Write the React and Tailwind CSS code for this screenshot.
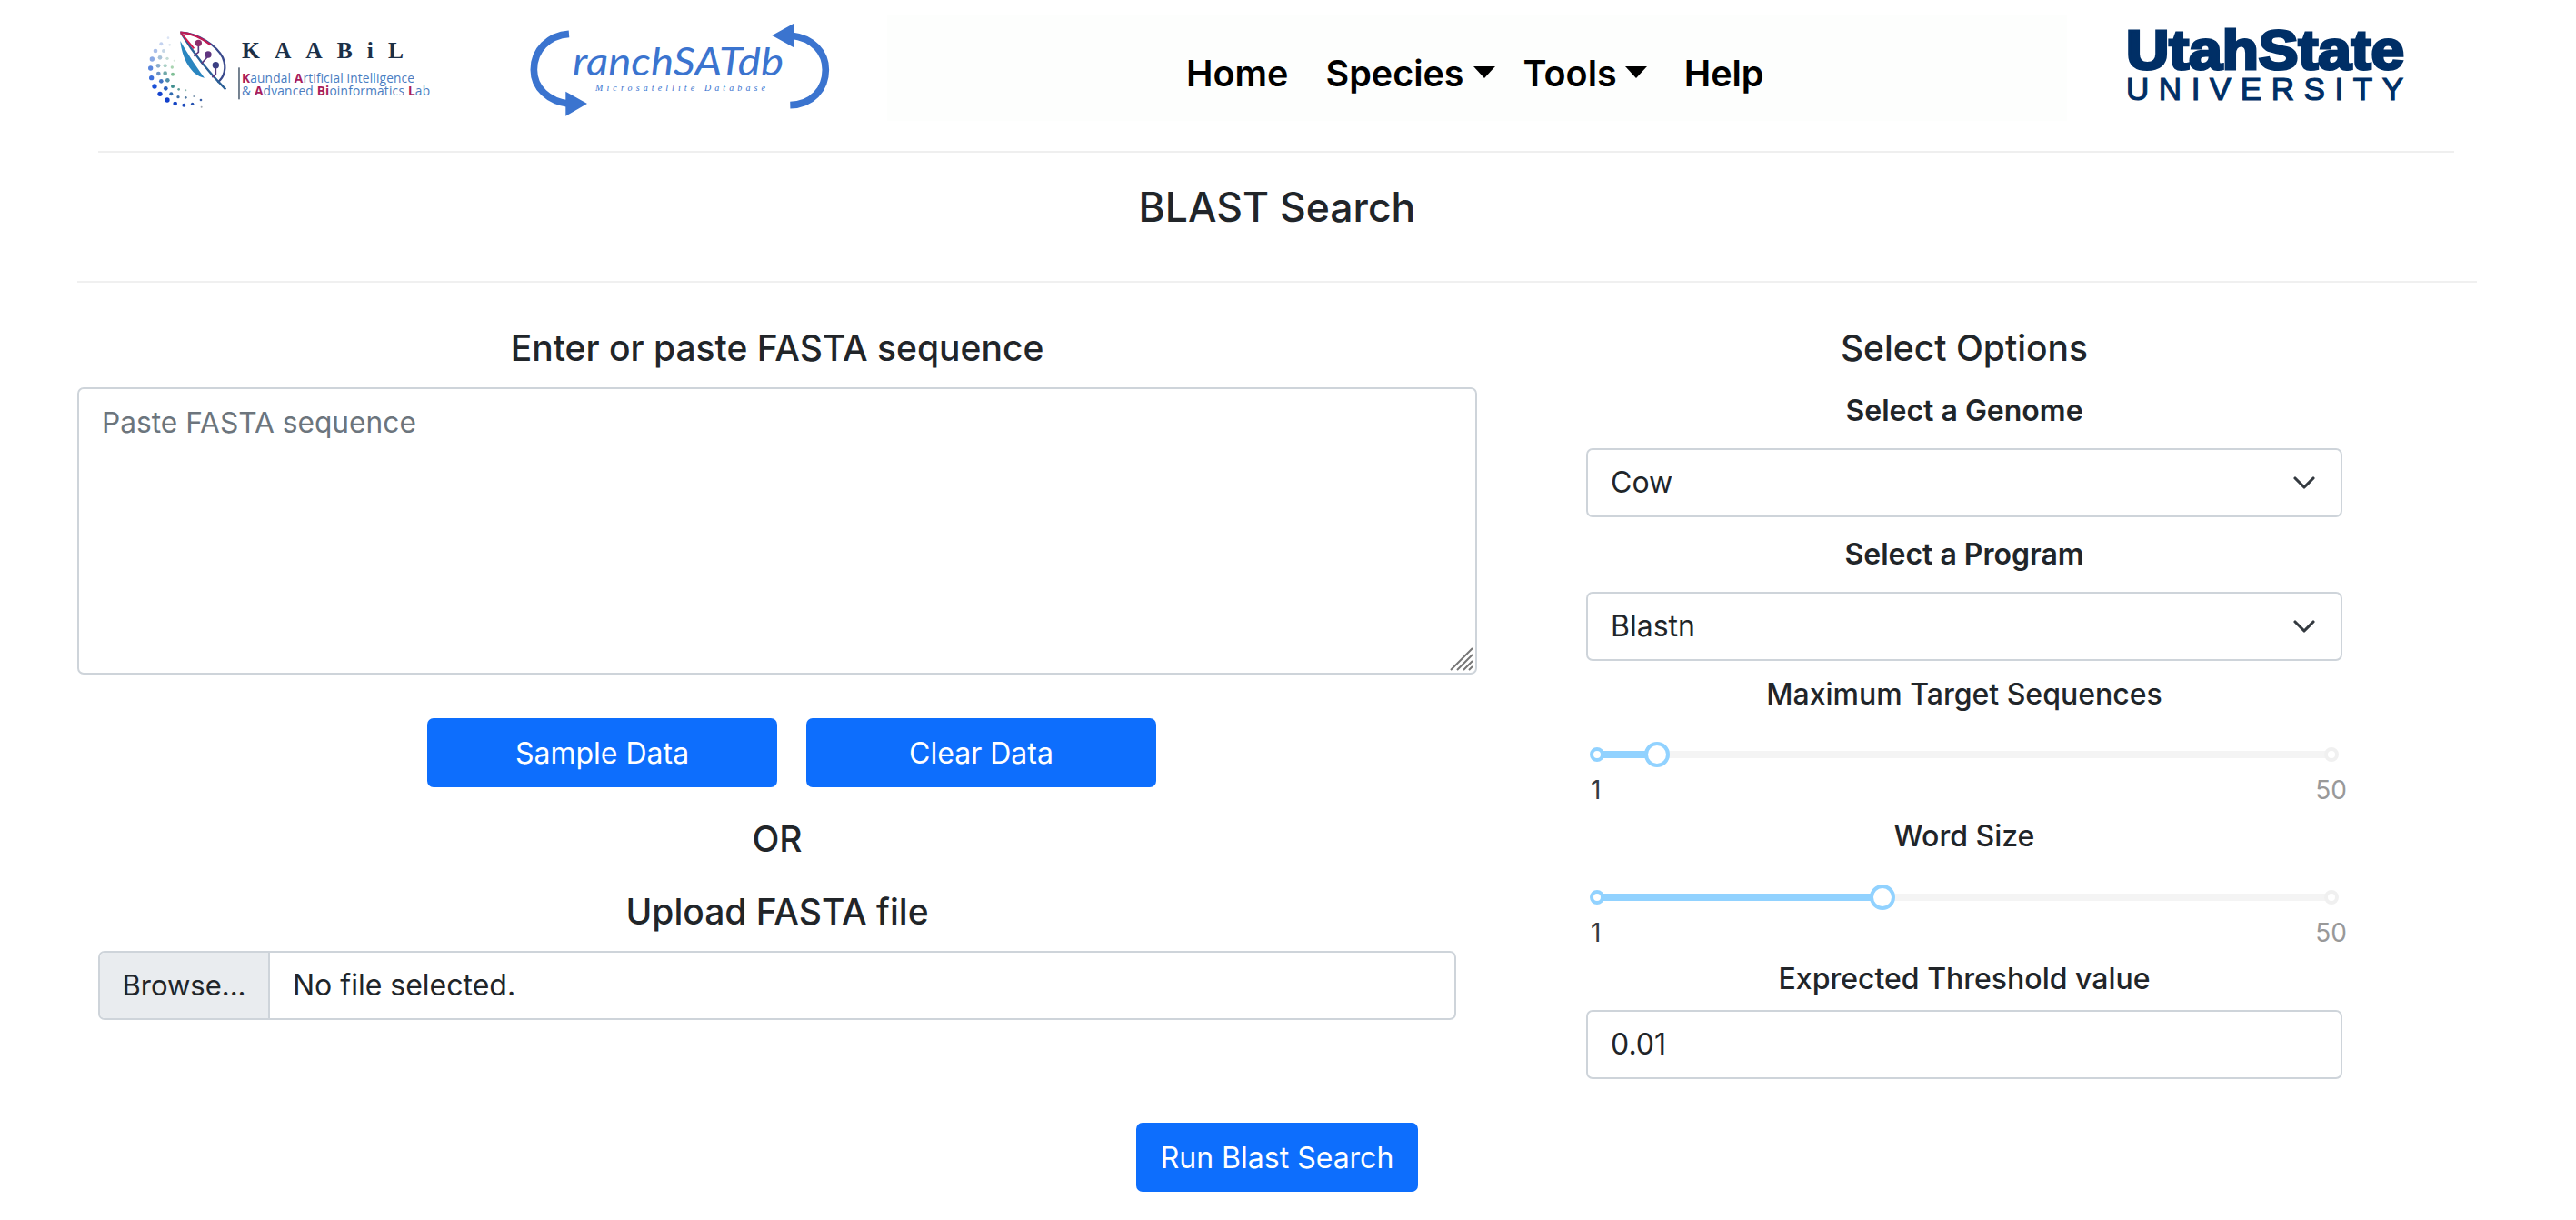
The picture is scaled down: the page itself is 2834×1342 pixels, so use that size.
import { ChevronDown } from "lucide-react";

const label = "text-[39px] leading-[40px] font-medium text-[#212529]";
const fieldLabel = "text-center text-[32px] leading-[40px] text-[#212529]";
const field = "h-[76px] rounded-[7px] border-2 border-[#ced4da] bg-white";

// dots of the KAABiL mark: x, y, radius, colour
const dots = [
  [105, 65, 4, "#dbe4f5"], [82, 85, 6, "#c3d2ef"], [110, 88, 4, "#dde6ee"], [63, 108, 7, "#a9bfe9"], [90, 108, 6, "#c5d6e6"],
  [52, 135, 8, "#8aa9e4"], [78, 130, 7, "#a9c2d8"], [102, 133, 5, "#c5dcd5"], [125, 140, 3, "#d5e8d8"], [47, 165, 8, "#5a86dd"],
  [72, 157, 7, "#8aaccd"], [95, 157, 6, "#a9cfc5"], [118, 162, 5, "#a8d4b0"], [50, 197, 8, "#3d6fdb"], [73, 183, 7, "#6a92c6"],
  [95, 182, 7, "#6fa8a8"], [120, 185, 6, "#7fbf96"], [60, 225, 8, "#1a50d8"], [82, 208, 7, "#3f72c4"], [103, 205, 7, "#4f8ea8"],
  [120, 225, 6, "#3f8f8f"], [140, 235, 4, "#5f9f98"], [163, 238, 3, "#8fb8b0"], [78, 250, 8, "#1443cf"], [97, 232, 7, "#2a60be"],
  [115, 250, 6, "#2f6ab0"], [138, 260, 5, "#3f70a8"], [163, 262, 4, "#4f78a0"], [190, 258, 3, "#7f98b0"], [102, 270, 8, "#1240cc"],
  [128, 282, 7, "#1444c4"], [157, 287, 6, "#1a48bc"], [185, 283, 5, "#2450b0"], [213, 270, 4, "#3a60a8"], [215, 293, 3, "#a0a8b0"],
];

function KaabilLogo() {
  return (
    <svg width="340" height="110" viewBox="0 0 340 110" className="shrink-0">
      <g transform="scale(0.3333)">
        {dots.map(([x, y, r, c], i) => (
          <circle key={i} cx={x} cy={y} r={r} fill={c} />
        ))}
        <path d="M145 75 C150 130 180 190 225 197 C190 150 165 110 145 75 Z" fill="#2a86c0" />
        <path d="M145 47 C205 50 265 90 285 130 C300 165 290 195 268 212" fill="none" stroke="#3a4a8c" strokeWidth="7" />
        <path d="M145 47 C185 50 215 65 245 88" fill="none" stroke="#c01a54" strokeWidth="7" />
        <path d="M148 50 C185 110 230 170 295 235" fill="none" stroke="#2a5f96" strokeWidth="7" />
        <path d="M148 50 L190 100" fill="none" stroke="#d01c50" strokeWidth="6" />
        <path d="M205 90 V112 L190 125 M237 125 L215 150 M262 160 V185 L250 195" fill="none" stroke="#5c3a80" strokeWidth="5" />
        <circle cx="205" cy="82" r="11" fill="#8e2d6c" />
        <circle cx="237" cy="120" r="11" fill="#5f3580" />
        <circle cx="262" cy="155" r="11" fill="#3a3f82" />
        <rect x="337" y="163" width="4" height="105" fill="#33465c" />
      </g>
      <text x="116" y="44.3" fontFamily="Liberation Serif, serif" fontWeight="700" fontSize="25.5" textLength="178" fill="#1c3048">KAABiL</text>
      <text x="116" y="70.7" fontFamily="Open Sans, sans-serif" fontSize="13.7" textLength="190" fill="#4a7cc0">
        <tspan fill="#a81e5c" fontWeight="700">K</tspan>aundal <tspan fill="#a81e5c" fontWeight="700">A</tspan>rtificial intelligence
      </text>
      <text x="116" y="85" fontFamily="Open Sans, sans-serif" fontSize="13.7" textLength="207" fill="#4a7cc0">
        &amp; <tspan fill="#a81e5c" fontWeight="700">A</tspan>dvanced <tspan fill="#a81e5c" fontWeight="700">Bi</tspan>oinformatics <tspan fill="#a81e5c" fontWeight="700">L</tspan>ab
      </text>
    </svg>
  );
}

function BranchLogo() {
  return (
    <svg width="360" height="120" viewBox="0 0 360 120" className="shrink-0">
      <g transform="scale(0.3333)">
        <path d="M168 67 C100 72 52 120 52 185 C52 245 100 290 170 298" fill="none" stroke="#3b74cf" strokeWidth="23" />
        <path d="M157 257 L228 297 L157 338 Z" fill="#3b74cf" />
        <path d="M898 302 C970 300 1015 250 1015 185 C1015 130 975 80 900 72" fill="none" stroke="#3b74cf" strokeWidth="23" />
        <path d="M910 32 L838 72 L910 112 Z" fill="#3b74cf" />
      </g>
      <text x="60" y="68" fontFamily="Lato, sans-serif" fontStyle="italic" fontSize="42" textLength="232" lengthAdjust="spacingAndGlyphs" fill="#3b74cf">ranchSATdb</text>
      <text x="85" y="85" fontFamily="Liberation Serif, serif" fontStyle="italic" fontSize="10" textLength="187" fill="#3b74cf">Microsatellite Database</text>
    </svg>
  );
}

function UsuLogo() {
  return (
    <svg width="340" height="110" viewBox="0 0 340 110" className="shrink-0">
      <text x="19" y="60.5" fontFamily="Liberation Sans, sans-serif" fontWeight="700" fontSize="62" textLength="306" lengthAdjust="spacingAndGlyphs" stroke="#002f66" strokeWidth="3.2" fill="#002f66">UtahState</text>
      <text x="19" y="94.5" fontFamily="Liberation Sans, sans-serif" fontSize="35" textLength="305" stroke="#002f66" strokeWidth="1.2" fill="#002f66">UNIVERSITY</text>
    </svg>
  );
}

function Caret() {
  return <i className="w-0 h-0 border-x-[12px] border-x-transparent border-t-[13px] border-t-black -mt-[5px]" />;
}

function Slider({ percent, thumbLeft }) {
  return (
    <div>
      <div className="relative h-[28px] mx-[12px]">
        <div className="absolute top-[10px] left-0 right-0 h-[8px] bg-[#f4f4f4]" />
        <div className="absolute top-[10px] left-0 h-[8px] bg-[#91d2ff]" style={{ width: `${percent}%` }} />
        <div className="absolute top-[6px] -left-[8px] w-[16px] h-[16px] rounded-full bg-white border-[4px] border-[#91d2ff]" />
        <div className="absolute top-[6px] -right-[8px] w-[16px] h-[16px] rounded-full bg-white border-[4px] border-[#f0f0f0]" />
        <div className="absolute top-0 w-[28px] h-[28px] rounded-full bg-white border-[4px] border-[#91d2ff]" style={{ left: thumbLeft }} />
      </div>
      <div className="flex justify-between pl-[5px] -mr-[5px] mt-[9px] text-[28px] leading-[32px]">
        <span className="text-[#343a40]">1</span>
        <span className="text-[#999]">50</span>
      </div>
    </div>
  );
}

function SelectBox({ value }) {
  return (
    <div className={`${field} flex items-center justify-between pl-[25px] pr-[20px] text-[32px] text-[#212529]`}>
      {value}
      <ChevronDown size={40} strokeWidth={1.9} className="text-[#343a40]" />
    </div>
  );
}

function BlueButton({ children, className }) {
  return (
    <button className={`h-[76px] pt-[2px] rounded-[7px] bg-[#0d6efd] text-white text-[32px] ${className}`}>{children}</button>
  );
}

export default function App() {
  return (
    <div className="w-[2834px] h-[1342px] overflow-hidden bg-white font-['Inter',sans-serif] text-[#212529]">
      <div className="ml-[108px] w-[2592px] h-[168px] border-b-2 border-[#efefef] flex items-start">
        <div className="ml-[42px] mt-[20px]"><KaabilLogo /></div>
        <div className="ml-[80px] mt-[15px]"><BranchLogo /></div>
        <nav className="ml-[46px] mt-[17px] w-[1298px] h-[116px] bg-[#fdfefd] flex items-center pt-[14px] pl-[329px] text-[39.5px] font-semibold text-black">
          <span>Home</span>
          <span className="flex items-center gap-[10px] ml-[41px]">Species<Caret /></span>
          <span className="flex items-center gap-[9px] ml-[31px]">Tools<Caret /></span>
          <span className="ml-[41px]">Help</span>
        </nav>
        <div className="ml-[46px] mt-[15px]"><UsuLogo /></div>
      </div>
      <div className="ml-[85px] w-[2640px]">
        <div className="h-[143px] border-b-2 border-[#f0f0f0] flex items-center justify-center">
          <h1 className="text-[44.5px] font-medium text-[#212529] -mt-[20px]">BLAST Search</h1>
        </div>
        <div className="flex mt-[52px]">
          <div className="w-[1540px] flex flex-col items-center">
            <h2 className={label}>Enter or paste FASTA sequence</h2>
            <div className="relative w-full h-[316px] mt-[23px] rounded-[7px] border-2 border-[#ced4da] px-[25px] py-[18px] text-[31.7px] leading-[38px] text-[#6c757d]">
              Paste FASTA sequence
              <svg width="26" height="26" viewBox="0 0 26 26" className="absolute right-[2px] bottom-[2px]">
                <path d="M1 25 L25 1 M8 25 L25 8 M15 25 L25 15 M21 25 L25 21" stroke="#777" strokeWidth="2" />
              </svg>
            </div>
            <div className="flex gap-[32px] mt-[48px] ml-[32px]">
              <BlueButton className="w-[385px]">Sample Data</BlueButton>
              <BlueButton className="w-[385px]">Clear Data</BlueButton>
            </div>
            <div className={`${label} mt-[37px]`}>OR</div>
            <h2 className={`${label} mt-[40px]`}>Upload FASTA file</h2>
            <div className={`${field} w-[1494px] mt-[23px] flex items-center overflow-hidden text-[32px]`}>
              <span className="w-[187px] h-full bg-[#e9ecef] border-r-2 border-[#ced4da] flex items-center justify-center text-[31px]">Browse...</span>
              <span className="ml-[25px]">No file selected.</span>
            </div>
          </div>
          <div className="w-[832px] ml-[120px] flex flex-col">
            <h2 className={`${label} text-center`}>Select Options</h2>
            <div className={`${fieldLabel} font-semibold mt-[29px] mb-[21px]`}>Select a Genome</div>
            <SelectBox value="Cow" />
            <div className={`${fieldLabel} font-semibold mt-[21px] mb-[21px]`}>Select a Program</div>
            <SelectBox value="Blastn" />
            <div className={`${fieldLabel} font-medium mt-[17px] mb-[32px]`}>Maximum Target Sequences</div>
            <Slider percent={8.2} thumbLeft="52px" />
            <div className={`${fieldLabel} font-medium mt-[15px] mb-[33px]`}>Word Size</div>
            <Slider percent={38.9} thumbLeft="300px" />
            <div className={`${fieldLabel} font-medium mt-[15px] mb-[14px]`}>Exprected Threshold value</div>
            <div className={`${field} flex items-center pl-[25px] text-[32px]`}>0.01</div>
          </div>
        </div>
        <div className="flex justify-center mt-[48px]">
          <BlueButton className="w-[310px]">Run Blast Search</BlueButton>
        </div>
      </div>
    </div>
  );
}
